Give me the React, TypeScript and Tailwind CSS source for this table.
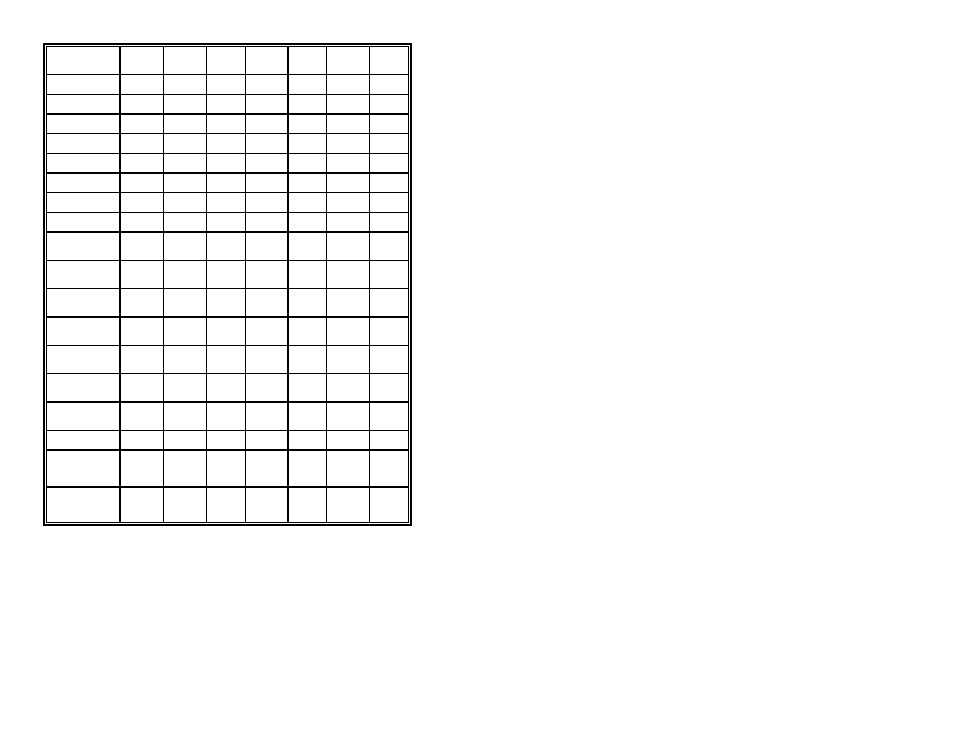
import React from 'react';

// row heights include the bottom rule; thick = 2px rule below the row
const rows = [
  { h: 28, thick: false },
  { h: 20, thick: false },
  { h: 20, thick: true },
  { h: 19, thick: false },
  { h: 20, thick: false },
  { h: 20, thick: true },
  { h: 19, thick: false },
  { h: 20, thick: false },
  { h: 20, thick: true },
  { h: 28, thick: false },
  { h: 28, thick: false },
  { h: 29, thick: true },
  { h: 28, thick: false },
  { h: 28, thick: false },
  { h: 29, thick: true },
  { h: 28, thick: false },
  { h: 20, thick: true },
  { h: 37, thick: true },
  { h: 34, thick: false },
];

const cols = 8;

const App = () => {
  return (
    <div className="min-h-screen bg-white pt-[43px] pl-[43px] font-['Liberation_Sans',sans-serif]">
      <div className="w-fit border-2 border-black p-px">
        <div className="grid grid-cols-[74px_43px_43px_39px_43px_38px_43px_38px] border border-black">
          {rows.map((row, r) =>
            Array.from({ length: cols }).map((_, c) => {
              const last = r === rows.length - 1;
              const bottom = last ? '' : row.thick ? 'border-b-2' : 'border-b';
              const right = c === cols - 1 ? '' : c === 0 || c === 4 ? 'border-r-2' : 'border-r';
              return (
                <div
                  key={`${r}-${c}`}
                  className={`border-black ${bottom} ${right}`}
                  style={{ height: last ? row.h : row.h }}
                />
              );
            })
          )}
        </div>
      </div>
    </div>
  );
};

export default App;
